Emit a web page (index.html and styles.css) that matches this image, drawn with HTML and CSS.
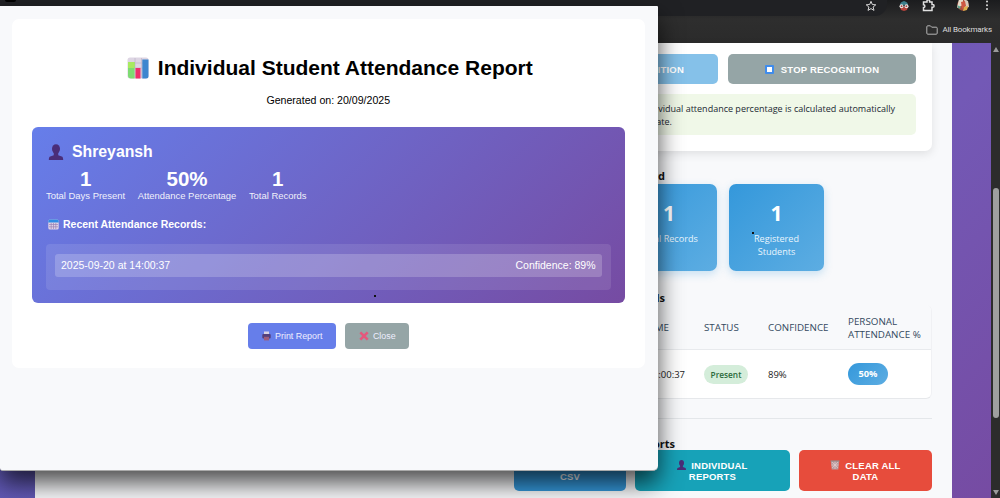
FILE: index.html
```html
<!DOCTYPE html>
<html lang="en">
<head>
  <meta charset="UTF-8">
  <meta name="viewport" content="width=device-width, initial-scale=1.0">
  <title>Individual Student Attendance Report</title>
  <link rel="stylesheet" href="styles.css">
</head>
<body>

<header class="browser">
  <div class="toolbar">
    <div class="address">
      <svg width="12" height="12" viewBox="0 0 12 12"><path d="M6 1.3 7.3 4.5 10.8 4.8 8.1 7 9 10.4 6 8.6 3 10.4 3.9 7 1.2 4.8 4.7 4.5Z" fill="none" stroke="#d5d5d5" stroke-width="1"/></svg>
    </div>
    <svg class="ext" width="12" height="12" viewBox="0 0 12 12"><path d="M2 5 Q2 2 6 1 Q10 2 10 5Z" fill="#3d7f8c"/><path d="M2 7h8L9 10 6 11 3 10Z" fill="#b5443c"/><circle cx="3.5" cy="6.2" r="2" fill="#e8e4e0"/><circle cx="8.5" cy="6.2" r="2" fill="#e8e4e0"/><circle cx="3.6" cy="6.2" r=".9" fill="#a44"/><circle cx="8.4" cy="6.2" r=".9" fill="#a44"/></svg>
    <svg class="puzzle" width="13" height="13" viewBox="0 0 13 13"><path d="M1.5 3H5V2a1.3 1.3 0 0 1 2.6 0V3H10V5.5h.7a1.4 1.4 0 0 1 0 2.8H10V11.5H1.5V8.6a1.4 1.4 0 0 0 0-2.8Z" fill="none" stroke="#e0e0e0" stroke-width="1.5"/></svg>
    <svg class="avatar" width="14" height="14" viewBox="0 0 14 14"><circle cx="7" cy="6" r="5.8" fill="#a8503f"/><path d="M3 0h4v6L1 9Z" fill="#e9dccb"/><path d="M8 0l4 2 1 6-4 1Z" fill="#d8cbbd"/><path d="M5 3l4-1 1 5-4 3Z" fill="#cf5843"/><path d="M8 8l4-1-1 4-4 1Z" fill="#e0b04c"/><path d="M1 6l4 2-2 2Z" fill="#58a894"/></svg>
    <svg width="4" height="12" viewBox="0 0 4 12" fill="#ddd"><circle cx="2" cy="1.5" r="1"/><circle cx="2" cy="5.3" r="1"/><circle cx="2" cy="9.1" r="1"/></svg>
  </div>
  <div class="bookmarks">
    <svg width="12" height="10" viewBox="0 0 12 10"><path d="M.8 1.8Q.8.8 1.8.8H4.4L5.7 2.2H10.2Q11.2 2.2 11.2 3.2V8.2Q11.2 9.2 10.2 9.2H1.8Q.8 9.2.8 8.2Z" fill="none" stroke="#b5b5b5"/></svg>
    <span>All Bookmarks</span>
  </div>
</header>

<div class="viewport">
  <main class="container">
    <section class="panel">
      <div class="card">
        <div class="controls">
          <button class="btn start">START RECOGNITION</button>
          <button class="btn stop">
            <svg width="9" height="9" viewBox="0 0 9 9"><rect width="9" height="9" rx="1" fill="#3f8cec"/><rect x="2" y="2" width="5" height="5" fill="#fff"/></svg>
            STOP RECOGNITION
          </button>
        </div>
        <div class="info">
          <p>Individual attendance percentage is calculated automatically</p>
          <p class="info-end">up to date.</p>
        </div>
      </div>

      <h3 class="head-dashboard">Attendance Dashboard</h3>
      <div class="stats">
        <div class="stat"><b>1</b><span>Present</span></div>
        <div class="stat"><b>1</b><span>Total Records</span></div>
        <div class="stat"><b>1</b><span>Registered<br>Students</span></div>
      </div>

      <h3 class="head-records">Recent Records</h3>
      <div class="table">
        <div class="row thead">
          <span>DATE</span><span class="time">TIME</span><span>STATUS</span><span>CONFIDENCE</span><span>PERSONAL<br>ATTENDANCE %</span>
        </div>
        <div class="row">
          <span></span><span class="time">14:00:37</span><span><i class="present">Present</i></span><span>89%</span><span><b class="percent">50%</b></span>
        </div>
      </div>

      <h3 class="head-reports">Export Reports</h3>
      <div class="exports">
        <button class="btn csv">EXPORT<br>CSV</button>
        <button class="btn individual"><span><svg width="9" height="10" viewBox="0 0 18 20"><use href="#person"/></svg> INDIVIDUAL<br>REPORTS</span></button>
        <button class="btn clear"><span><svg width="10" height="10" viewBox="0 0 10 10"><path d="M.8.8H9.2L8.3 9.5H1.7Z" fill="#b99c9f"/><path d="M2 2l6 6M8 2L2 8M5 1v8M1.5 5h7" stroke="#e3cccd" stroke-width=".7"/><path d="M.5 1h9" stroke="#8f8585"/></svg> CLEAR ALL<br>DATA</span></button>
      </div>
    </section>
  </main>
  <div class="scrollbar">
    <i class="up"></i>
    <div class="thumb"></div>
    <i class="down"></i>
  </div>
</div>

<div class="popup">
  <div class="report">
    <h1>
      <svg width="22" height="22" viewBox="0 0 22 22"><rect x=".5" y=".5" width="21" height="21" rx="2.5" fill="#ddd5e3"/><path d="M8 1v20M14.5 1v20M1 6h20M1 11h20" stroke="#c2b8cb" stroke-width=".8"/><path d="M1 5H7.6V21.5H4Q1 21.5 1 18.5Z" fill="#7edb72"/><path d="M1 5H7.6V11H1Z" fill="#a8ea60"/><rect x="8.5" y="11" width="5" height="10.5" fill="#ee2f6b"/><path d="M15.3 2.5H21.5V19Q21.5 21.5 19 21.5H15.3Z" fill="#3d86cf"/></svg>
      <span>Individual Student Attendance Report</span>
    </h1>
    <p class="generated">Generated on: 20/09/2025</p>

    <div class="student">
      <h2>
        <svg width="16" height="16" viewBox="0 0 18 20"><g id="person"><ellipse cx="9" cy="6.2" rx="5" ry="6" fill="#4a2d78"/><path d="M6.2 10h5.6v4L17 16q1 1 1 4H0q0-3 1-4l5.2-2Z" fill="#4a2d78"/></g></svg>
        <span>Shreyansh</span>
      </h2>
      <div class="numbers">
        <div><b>1</b><span>Total Days Present</span></div>
        <div><b>50%</b><span>Attendance Percentage</span></div>
        <div><b>1</b><span>Total Records</span></div>
      </div>
      <h4>
        <svg width="11" height="11" viewBox="0 0 11 11"><rect x=".3" y=".5" width="10.4" height="10" rx="1.5" fill="#e0d3e6"/><path d="M.3 3.4V2Q.3.5 1.8.5H9.2Q10.7.5 10.7 2V3.4Z" fill="#2f8de4"/><path d="M3.2 4v6M5.5 4v6M7.8 4v6M1 5.5h9M1 7.8h9" stroke="#9a83b5" stroke-width=".7"/></svg>
        <span>Recent Attendance Records:</span>
      </h4>
      <div class="records">
        <div class="record"><span>2025-09-20 at 14:00:37</span><span>Confidence: 89%</span></div>
      </div>
      <i class="dot"></i>
    </div>

    <div class="actions">
      <button class="action print">
        <svg width="9" height="10" viewBox="0 0 9 10"><rect x="2" y=".5" width="5" height="4" fill="#d9d3e4"/><rect x=".3" y="3" width="8.4" height="4.6" rx="1" fill="#54407c"/><rect x="2" y="5.8" width="5" height="3.6" fill="#9c5d7c"/></svg>
        <span>Print Report</span>
      </button>
      <button class="action close">
        <svg width="10" height="10" viewBox="0 0 10 10"><path d="M1.3 1.3 8.7 8.7M8.7 1.3 1.3 8.7" stroke="#e4587c" stroke-width="2.6"/></svg>
        <span>Close</span>
      </button>
    </div>
  </div>
</div>
<i class="dot dot-stat"></i>
<i class="tab-edge"></i>

</body>
</html>
```
FILE: styles.css
```css
* { box-sizing: border-box; }
body { margin: 0; width: 1000px; height: 498px; overflow: hidden; position: relative; display: flex; flex-direction: column; font-family: "Open Sans", "Noto Sans", sans-serif; background: #222; }
h1, h2, h3, h4, p { margin: 0; }
button { border: none; padding: 0; cursor: pointer; }
svg { flex: none; }
i { font-style: normal; }

/* browser bar */
.browser { height: 43px; flex: none; background: linear-gradient(#1b1c1e, #2e2e2e 45%, #2b2b2b); }
.toolbar { height: 16px; display: flex; justify-content: flex-end; padding-right: 11px; }
.address { width: 887px; height: 16px; background: #202124; border-radius: 0 0 12px 0; display: flex; justify-content: flex-end; padding-right: 10px; }
.ext { margin-left: 11px; }
.puzzle { margin-left: 12px; margin-top: -1px; }
.avatar { margin: -1px 15px 0 21px; }
.bookmarks { height: 27px; display: flex; justify-content: flex-end; align-items: center; gap: 4px; padding-right: 8px; font-size: 8px; letter-spacing: -0.15px; color: #ddd; font-family: Roboto, sans-serif; }

/* page */
.viewport { flex: 1; min-height: 0; display: flex; background: linear-gradient(135deg, #667eea 0%, #5b58b4 20%, #7359b6 70%, #764ba2 100%); }
.container { width: 917px; margin-left: 35px; background: #f8f9fb; display: flex; justify-content: flex-end; padding-right: 20px; }
.panel { width: 418px; height: 455px; }
.card { height: 108px; padding: 11px 16px 0; background: #fff; border-radius: 0 0 7px 7px; box-shadow: 0 3px 10px rgba(0,0,0,0.1); }
.controls { display: grid; grid-template-columns: 1fr 1fr; gap: 10px; }
.btn { display: flex; justify-content: center; align-items: center; gap: 7px; border-radius: 5px; color: #fff; font: bold 9.5px/11px "Liberation Sans", Arial, sans-serif; letter-spacing: 0.2px; text-align: center; }
.controls .btn { height: 30px; }
.controls .start { background: #85c1e9; justify-content: flex-end; padding-right: 34px; }
.stop { background: #95a5a6; }
.info { height: 41px; margin-top: 10px; padding: 9px 21px 0 0; border-radius: 5px; background: #f0f8e8; font-size: 9px; line-height: 12.5px; color: #1c2833; text-align: right; white-space: nowrap; }
.info .info-end { padding-right: 223px; }
.panel h3 { font-size: 11px; line-height: 14px; color: #111; text-align: right; }
.head-dashboard { margin-top: 18px; padding-right: 267px; }
.stats { display: flex; gap: 12.5px; margin-top: 1px; }
.stat { width: 95px; height: 87px; padding-top: 15px; border-radius: 7px; background: linear-gradient(135deg, #3498db, #5dade2); box-shadow: 0 3px 8px rgba(52,152,219,0.25); color: #fff; text-align: center; display: flex; flex-direction: column; }
.stat b { font-size: 21px; line-height: 28px; }
.stat span { font-size: 9.1px; line-height: 12.5px; margin-top: 6px; color: #e9f5fd; }
.head-records { margin-top: 20px; padding-right: 267px; }
.table { border-radius: 6px; border-bottom: 1px solid #e6e8eb; border-right: 1px solid #f0f1f4; background: #fff; overflow: hidden; }
.row { display: grid; grid-template-columns: 120px 70px 64px 80px 84px; align-items: center; height: 48px; font-size: 9.5px; color: #222; }
.thead { height: 45px; padding-top: 3px; border-bottom: 1px solid #e8eaed; background: #f8f9fb; color: #34495e; font-size: 9.8px; line-height: 12.5px; font-weight: 500; white-space: nowrap; }
.row .time { text-align: right; padding-right: 19px; }
.thead .time { padding-right: 35px; }
.present { display: inline-block; width: 44px; height: 19px; border-radius: 10px; background: #d4edda; color: #2b6a3c; font-size: 8.3px; font-weight: 600; line-height: 19px; text-align: center; }
.percent { display: inline-block; width: 40px; height: 22px; border-radius: 11px; background: linear-gradient(135deg, #3498db, #5dade2); color: #fff; font-size: 9.3px; line-height: 22px; text-align: center; }
.panel .head-reports { margin-top: 19px; padding-top: 18px; padding-right: 257px; border-top: 1px solid #e4e7ea; line-height: 13px; }
.exports { display: grid; grid-template-columns: 112px 155px 133px; gap: 9px; }
.exports .btn { height: 41px; }
.exports svg { vertical-align: -1px; margin-right: 2px; }
.csv { background: #3498db; }
.individual { background: #17a2b8; }
.clear { background: #e74c3c; }
.scrollbar { width: 9px; margin-left: auto; background: #2c2c2c; display: flex; flex-direction: column; align-items: center; justify-content: space-between; padding: 4px 0 3px; }
.up, .down { border: 3px solid transparent; }
.up { border-top: 0; border-bottom: 5px solid #9a9a9a; }
.down { border-bottom: 0; border-top: 5px solid #9a9a9a; }
.thumb { width: 6px; height: 230px; border-radius: 3px; background: #9f9f9f; margin-top: -3px; margin-bottom: -67px; }

/* report window */
.popup { position: absolute; left: 0; top: 6px; width: 657.5px; height: 465px; padding: 13px 13px 0 12px; background: #f8f9fb; border-radius: 0 1px 5px 3px; border-bottom: 1px solid #aaa; box-shadow: 0 12px 24px rgba(0,0,0,0.7); font-family: "Liberation Sans", Arial, sans-serif; }
.report { height: 349px; padding: 35px 20px 0; background: #fff; border-radius: 7px; color: #000; }
.report h1 { display: flex; justify-content: center; align-items: center; gap: 9px; padding-left: 3px; height: 28px; font-size: 21px; white-space: nowrap; }
.generated { margin-top: 11px; height: 14px; line-height: 14px; font-size: 10.6px; text-align: center; }
.student { position: relative; height: 176px; margin-top: 20px; padding: 15px 14px 0; border-radius: 6px; background: linear-gradient(135deg, #667eea 0%, #764ba2 100%); color: #fff; }
.student h2 { display: flex; align-items: center; gap: 8px; height: 20px; padding-left: 2px; font-size: 15.8px; }
.numbers { display: flex; gap: 12.5px; height: 41px; padding-top: 6px; text-align: center; white-space: nowrap; }
.numbers b, .numbers span { display: block; }
.numbers b { font-size: 20.5px; line-height: 22px; }
.numbers span { font-size: 9.45px; line-height: 12px; opacity: 0.9; }
.student h4 { display: flex; align-items: center; gap: 4px; height: 14px; margin-top: 14px; padding-left: 2px; font-size: 10.5px; }
.records { height: 46px; margin-top: 13px; padding: 10px 9px 0; border-radius: 4px; background: rgba(255,255,255,0.1); }
.record { height: 23px; display: flex; justify-content: space-between; align-items: center; padding: 0 6px 2px; border-radius: 3px; background: rgba(255,255,255,0.2); font-size: 10.5px; }
.actions { display: flex; justify-content: center; gap: 9px; margin-top: 20px; padding-left: 1px; }
.action { display: flex; align-items: center; justify-content: center; gap: 4px; height: 26px; border-radius: 4px; color: #eef; font: 8.9px "Liberation Sans", Arial, sans-serif; }
.print { width: 88px; background: #667eea; }
.close { width: 64px; background: #95a5a6; }
.dot { position: absolute; left: 342px; top: 168px; width: 2px; height: 2px; background: #111; }
.dot-stat { left: 752px; top: 232px; }
.tab-edge { position: absolute; left: 5px; top: 0; width: 11px; height: 2px; border-radius: 0 0 5px 5px; background: #000; }
```
